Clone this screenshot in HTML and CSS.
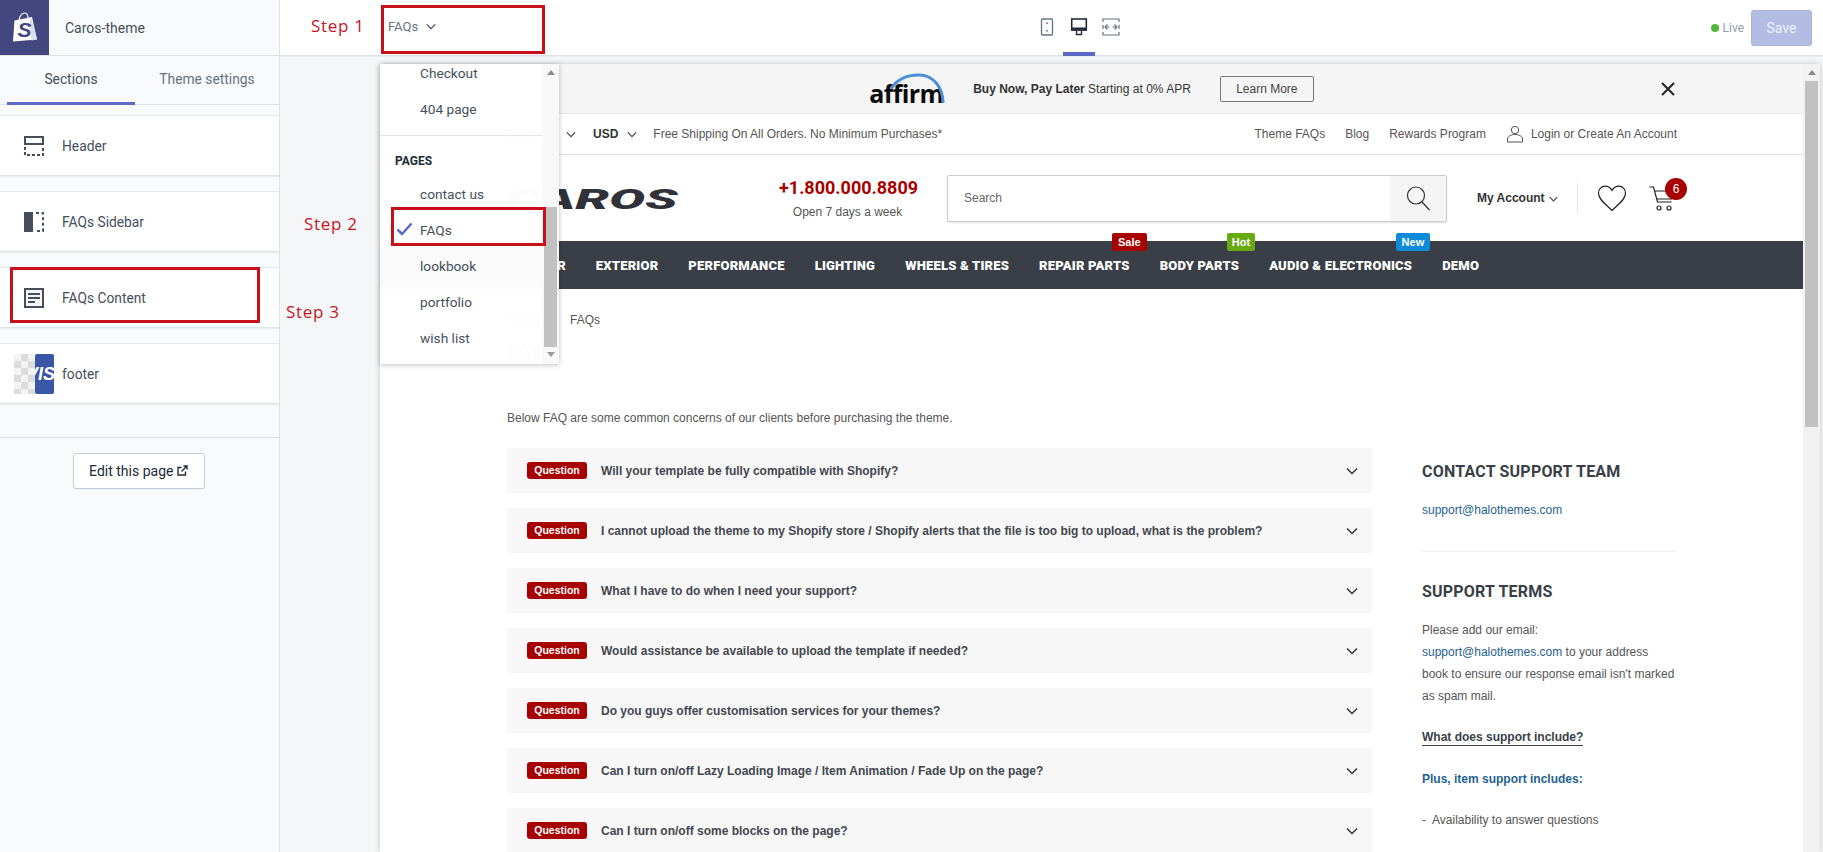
FILE: index.html
```html
<!DOCTYPE html>
<html lang="en">
<head>
    <meta charset="UTF-8">
    <meta name="viewport" content="width=device-width, initial-scale=1.0">
    <title>Caros-theme - Customize</title>
    <link rel="stylesheet" href="styles.css">
</head>

<body>

    <svg class="defs" width="0" height="0">
        <symbol id="chev" viewBox="0 0 12 8"><path d="M1 1.5l5 5 5-5" fill="none" stroke="currentColor" stroke-width="1.5"/></symbol>
    </svg>

    <!-- Top bar -->
    <header class="topbar">
        <div class="brand">
            <div class="brand-logo">
                <svg width="26" height="31" viewBox="0 0 26 31">
                    <path d="M2.500 8.500L20 5 25 27.500 1 29.500z" fill="#fff"/>
                    <path d="M19 5.200L25 27.500 19.500 28.500 17.500 5.500z" fill="#d9dcee"/>
                    <path d="M7 8c0.500-4 3-7 5.500-7S16 3 16 6" fill="none" stroke="#fff" stroke-width="1.200"/>
                    <text x="5.500" y="25" class="brand-s">S</text>
                </svg>
            </div>
            <div class="brand-name">Caros-theme</div>
        </div>
        <div class="page-select">
            <span>FAQs</span>
            <svg class="chev-page" width="10" height="7"><use href="#chev"/></svg>
        </div>
        <div class="devices">
            <div class="device">
                <svg width="16" height="18" viewBox="0 0 16 18"><rect x="2.500" y="1" width="11" height="16" rx="1" fill="none" stroke="#637381" stroke-width="1.300"/><path d="M8 4.500v1.500M8 12v1.500" stroke="#454f5b" stroke-width="1.300"/></svg>
            </div>
            <div class="device device-active">
                <svg width="18" height="18" viewBox="0 0 18 18"><rect x="1.700" y="1" width="14.600" height="11" fill="none" stroke="#212b36" stroke-width="1.600"/><rect x="1.700" y="9.500" width="14.600" height="3" fill="#212b36"/><path d="M6.500 13v3.500h5V13" fill="none" stroke="#212b36" stroke-width="1.400"/></svg>
            </div>
            <div class="device">
                <svg width="18" height="18" viewBox="0 0 18 18"><path d="M1 4V1h16v3M1 14v3h16v-3M1 7v4M17 7v4" fill="none" stroke="#637381" stroke-width="1.200"/><path d="M3 9h4.500M10.500 9H15M5.500 6.500L3 9l2.500 2.500M12.500 6.500L15 9l-2.500 2.500" fill="none" stroke="#637381" stroke-width="1.200"/></svg>
            </div>
        </div>
        <div class="top-actions">
            <span class="live-dot"></span>
            <span class="live-text">Live</span>
            <button class="save-button">Save</button>
        </div>
    </header>

    <div class="workspace">

        <!-- Sidebar -->
        <aside class="sidebar">
            <div class="tabs">
                <div class="tab tab-active">Sections</div>
                <div class="tab">Theme settings</div>
            </div>

            <div class="section-card">
                <svg width="20" height="20" viewBox="0 0 20 20"><rect x="1" y="1" width="18" height="7" fill="#fff" stroke="#454f5b" stroke-width="2"/><path d="M1 11v8h18v-8" fill="none" stroke="#454f5b" stroke-width="2" stroke-dasharray="3 2"/></svg>
                <span>Header</span>
            </div>
            <div class="section-card">
                <svg width="20" height="20" viewBox="0 0 20 20"><rect x="0" y="0" width="9" height="20" fill="#454f5b"/><path d="M12 1h7v18h-7" fill="none" stroke="#454f5b" stroke-width="2" stroke-dasharray="3 2.600"/></svg>
                <span>FAQs Sidebar</span>
            </div>
            <div class="section-card">
                <svg width="20" height="20" viewBox="0 0 20 20"><rect x="1" y="1" width="18" height="18" fill="#f4f6f8" stroke="#454f5b" stroke-width="2"/><path d="M4 6h12M4 10h12M4 14h7" stroke="#454f5b" stroke-width="2"/></svg>
                <span>FAQs Content</span>
            </div>
            <div class="section-card section-card-image">
                <div class="footer-thumb">
                    <div class="thumb-check"></div>
                    <div class="thumb-visa">VIS</div>
                </div>
                <span>footer</span>
            </div>

            <div class="sidebar-foot">
                <button class="edit-button">Edit this page
                    <svg width="11" height="11" viewBox="0 0 11 11"><path d="M8.500 6.500V10H1V2.500h3.500" fill="none" stroke="#212b36" stroke-width="1.400"/><path d="M4.500 6.500L10 1M6.500 1H10v3.500" fill="none" stroke="#212b36" stroke-width="1.400"/></svg>
                </button>
            </div>
        </aside>

        <!-- Store preview -->
        <main class="preview">
            <div class="frame">
                <div class="store">

                    <div class="promo">
                        <div></div>
                        <div class="promo-middle">
                            <div class="affirm">
                                <svg class="affirm-arc" width="56" height="32" viewBox="0 0 56 32"><path d="M2 16C8 6 18 2 30 2c14 0 24 12 24 28" fill="none" stroke="#4a90d9" stroke-width="3"/></svg>
                                <span>affirm</span>
                            </div>
                            <div class="promo-text"><b>Buy Now, Pay Later</b> Starting at 0% APR</div>
                            <button class="learn-more">Learn More</button>
                        </div>
                        <svg class="promo-close" width="16" height="16" viewBox="0 0 16 16"><path d="M2 2l12 12M14 2L2 14" stroke="#222" stroke-width="2"/></svg>
                    </div>

                    <div class="utility">
                        <div class="utility-left">
                            <b class="utility-lang">English</b>
                            <svg class="chev-small" width="10" height="7"><use href="#chev"/></svg>
                            <b class="utility-usd">USD</b>
                            <svg class="chev-small" width="10" height="7"><use href="#chev"/></svg>
                            <span class="utility-ship">Free Shipping On All Orders. No Minimum Purchases*</span>
                        </div>
                        <div class="utility-right">
                            <span>Theme FAQs</span>
                            <span>Blog</span>
                            <span>Rewards Program</span>
                            <span class="utility-login">
                                <svg width="18" height="18" viewBox="0 0 18 18"><circle cx="9" cy="5" r="3.700" fill="none" stroke="#555" stroke-width="1"/><path d="M9 9.500c-3 0-7.500 1.500-7.500 4.500v3h15v-3c0-3-4.500-4.500-7.500-4.500z" fill="none" stroke="#555" stroke-width="1"/></svg>
                                Login or Create An Account
                            </span>
                        </div>
                    </div>

                    <div class="masthead">
                        <div class="logo"><span>CAROS</span></div>
                        <div class="phone">
                            <div class="phone-number">+1.800.000.8809</div>
                            <div class="phone-note">Open 7 days a week</div>
                        </div>
                        <div class="search">
                            <div class="search-input">Search</div>
                            <div class="search-button">
                                <svg width="26" height="26" viewBox="0 0 26 26"><circle cx="11" cy="10.500" r="8.500" fill="none" stroke="#333" stroke-width="1.200"/><path d="M17 17l7.500 8" stroke="#333" stroke-width="1.200"/></svg>
                            </div>
                        </div>
                        <div class="account">My Account <svg class="chev-small" width="9" height="6"><use href="#chev"/></svg></div>
                        <div class="wish">
                            <svg width="30" height="27" viewBox="0 0 30 27"><path d="M15 25.500C9 19.500 1.500 14.500 1.500 8.300 1.500 4 4.500 1.200 8 1.200c3 0 5.500 1.500 7 4.300 1.500-2.800 4-4.300 7-4.300 3.500 0 6.500 2.800 6.500 7.100C28.500 14.500 21 19.500 15 25.500z" fill="none" stroke="#222" stroke-width="1.200"/></svg>
                        </div>
                        <div class="cart">
                            <svg width="26" height="28" viewBox="0 0 26 28"><path d="M0.500 3h4l4 15h14" fill="none" stroke="#222" stroke-width="1.200"/><path d="M5.500 7h19l-2 8H8" fill="none" stroke="#222" stroke-width="1.200"/><circle cx="10" cy="24" r="2" fill="none" stroke="#222" stroke-width="1.200"/><circle cx="20" cy="24" r="2" fill="none" stroke="#222" stroke-width="1.200"/></svg>
                            <span class="cart-count">6</span>
                        </div>
                    </div>

                    <nav class="nav">
                        <a>INTERIOR</a>
                        <a>EXTERIOR</a>
                        <a>PERFORMANCE</a>
                        <a>LIGHTING</a>
                        <a>WHEELS &amp; TIRES</a>
                        <a>REPAIR PARTS<span class="nav-tag tag-sale">Sale</span></a>
                        <a>BODY PARTS<span class="nav-tag tag-hot">Hot</span></a>
                        <a>AUDIO &amp; ELECTRONICS<span class="nav-tag tag-new">New</span></a>
                        <a>DEMO</a>
                    </nav>

                    <div class="content">
                        <div class="breadcrumb"><span class="crumb-home">Home</span><span>FAQs</span></div>
                        <h1>FAQs</h1>
                        <p class="intro">Below FAQ are some common concerns of our clients before purchasing the theme.</p>

                        <div class="columns">
                            <div class="faq-list">
                                <div class="faq-row"><span class="faq-tag">Question</span><span class="faq-q">Will your template be fully compatible with Shopify?</span><svg class="chev-faq" width="12" height="8"><use href="#chev"/></svg></div>
                                <div class="faq-row"><span class="faq-tag">Question</span><span class="faq-q">I cannot upload the theme to my Shopify store / Shopify alerts that the file is too big to upload, what is the problem?</span><svg class="chev-faq" width="12" height="8"><use href="#chev"/></svg></div>
                                <div class="faq-row"><span class="faq-tag">Question</span><span class="faq-q">What I have to do when I need your support?</span><svg class="chev-faq" width="12" height="8"><use href="#chev"/></svg></div>
                                <div class="faq-row"><span class="faq-tag">Question</span><span class="faq-q">Would assistance be available to upload the template if needed?</span><svg class="chev-faq" width="12" height="8"><use href="#chev"/></svg></div>
                                <div class="faq-row"><span class="faq-tag">Question</span><span class="faq-q">Do you guys offer customisation services for your themes?</span><svg class="chev-faq" width="12" height="8"><use href="#chev"/></svg></div>
                                <div class="faq-row"><span class="faq-tag">Question</span><span class="faq-q">Can I turn on/off Lazy Loading Image / Item Animation / Fade Up on the page?</span><svg class="chev-faq" width="12" height="8"><use href="#chev"/></svg></div>
                                <div class="faq-row"><span class="faq-tag">Question</span><span class="faq-q">Can I turn on/off some blocks on the page?</span><svg class="chev-faq" width="12" height="8"><use href="#chev"/></svg></div>
                            </div>

                            <div class="support">
                                <h3>CONTACT SUPPORT TEAM</h3>
                                <p class="support-mail"><a>support@halothemes.com</a></p>
                                <hr>
                                <h3>SUPPORT TERMS</h3>
                                <p class="support-terms">Please add our email:<br><a>support@halothemes.com</a> to your address<br>book to ensure our response email isn't marked<br>as spam mail.</p>
                                <p class="support-what"><b>What does support include?</b></p>
                                <p class="support-plus"><b>Plus, item support includes:</b></p>
                                <p class="support-item">-&nbsp; Availability to answer questions</p>
                            </div>
                        </div>
                    </div>
                </div>

                <div class="scrollbar">
                    <span class="arrow-up"></span>
                    <div class="scroll-thumb"></div>
                </div>
            </div>

            <!-- Page picker dropdown -->
            <div class="dropdown">
                <div class="drop-list">
                    <div class="drop-item drop-first">Checkout</div>
                    <div class="drop-item">404 page</div>
                    <div class="drop-divider"></div>
                    <div class="drop-title">PAGES</div>
                    <div class="drop-item">contact us</div>
                    <div class="drop-item drop-current">
                        <svg width="17" height="14" viewBox="0 0 17 14"><path d="M1.500 7.500l4.500 4.500L15.500 1.500" fill="none" stroke="#5c6ac4" stroke-width="2.500"/></svg>
                        FAQs
                    </div>
                    <div class="drop-item drop-hover">lookbook</div>
                    <div class="drop-item">portfolio</div>
                    <div class="drop-item">wish list</div>
                </div>
                <div class="drop-scroll">
                    <span class="arrow-up"></span>
                    <div class="drop-thumb"></div>
                    <span class="arrow-down"></span>
                </div>
            </div>
        </main>
    </div>

    <!-- Tutorial annotations -->
    <div class="step step-1">Step 1</div>
    <div class="step step-2">Step 2</div>
    <div class="step step-3">Step 3</div>
    <div class="mark mark-1"></div>
    <div class="mark mark-2"></div>
    <div class="mark mark-3"></div>

</body>
</html>
```

FILE: styles.css
```css
* {
    box-sizing: border-box;
}

html, body {
    margin: 0;
    height: 852px;
    overflow: hidden;
}

body {
    position: relative;
    font-family: Roboto, sans-serif;
    font-size: 14px;
    color: #454f5b;
    background: #f4f6f8;
    display: flex;
    flex-direction: column;
}

.defs {
    position: absolute;
}

button {
    font-family: inherit;
}

/* Top bar */
.topbar {
    height: 56px;
    flex: none;
    display: flex;
    align-items: center;
    background: white;
    border-bottom: 1px solid #dfe3e8;
    box-shadow: 0 1px 1px rgba(0, 0, 0, 0.04);
}

.brand {
    width: 280px;
    height: 100%;
    flex: none;
    display: flex;
    align-items: center;
    background: #f9fafb;
    border-right: 1px solid #dfe3e8;
}

.brand-logo {
    width: 49px;
    height: 100%;
    background: #43467f;
    display: flex;
    align-items: center;
    justify-content: center;
}

.brand-s {
    font-family: "Liberation Sans", sans-serif;
    font-weight: bold;
    font-style: italic;
    font-size: 21px;
    fill: #43467f;
}

.brand-name {
    margin-left: 16px;
    font-size: 14px;
}

.page-select {
    width: 700px;
    padding-left: 108px;
    flex: none;
    display: flex;
    align-items: center;
    gap: 8px;
    font-size: 13px;
    color: #637381;
    margin-top: -2px;
}

.chev-page {
    color: #454f5b;
}

.devices {
    height: 56px;
    display: flex;
    margin-left: 51px;
}

.device {
    width: 32px;
    display: flex;
    align-items: center;
    justify-content: center;
    padding-bottom: 2px;
}

.device-active {
    border-bottom: 4px solid #5c6ac4;
    padding-bottom: 0;
    padding-top: 2px;
}

.top-actions {
    margin-left: auto;
    display: flex;
    align-items: center;
    padding-right: 11px;
}

.live-dot {
    width: 8px;
    height: 8px;
    border-radius: 50%;
    background: #50b83c;
    margin-right: 4px;
}

.live-text {
    font-size: 12px;
    color: #919eab;
    margin-right: 7px;
}

.save-button {
    width: 61px;
    height: 36px;
    border: 1px solid #a7b0dc;
    border-radius: 3px;
    background: #b3bce3;
    color: #eef0fa;
    font-size: 14px;
}

/* Main area */
.workspace {
    flex: 1;
    min-height: 0;
    display: flex;
}

.sidebar {
    width: 280px;
    flex: none;
    background: #f9fafb;
    border-right: 1px solid #dfe3e8;
}

.tabs {
    display: flex;
    height: 49px;
    padding-left: 7px;
    border-bottom: 1px solid #dfe3e8;
    margin-bottom: 10px;
    font-size: 13.800px;
}

.tab {
    width: 128px;
    text-align: center;
    line-height: 46px;
    color: #637381;
    margin-bottom: -1px;
}

.tab + .tab {
    width: 144px;
}

.tab-active {
    color: #454f5b;
    border-bottom: 3px solid #5c6ac4;
}

.section-card {
    height: 61px;
    margin-bottom: 15px;
    padding-left: 24px;
    display: flex;
    align-items: center;
    gap: 18px;
    font-size: 13.800px;
    background: white;
    border-top: 1px solid #e4e7eb;
    border-bottom: 1px solid #dfe3e8;
    box-shadow: 0 1px 1px rgba(0, 0, 0, 0.05);
}

.section-card-image {
    padding-left: 14px;
    gap: 8px;
    margin-bottom: 0;
}

.footer-thumb {
    display: flex;
    width: 40px;
    height: 40px;
}

.thumb-check {
    width: 21px;
    background: repeating-conic-gradient(#dcdcdc 0 25%, #f3f3f3 0 50%) 0 0 / 14px 14px;
}

.thumb-visa {
    width: 19px;
    overflow: hidden;
    background: #3a57a7;
    border-radius: 2px;
    color: white;
    font-family: "Liberation Sans", sans-serif;
    font-weight: bold;
    font-style: italic;
    font-size: 18px;
    line-height: 40px;
    text-indent: -9px;
    white-space: nowrap;
}

.sidebar-foot {
    margin-top: 33px;
    padding-top: 15px;
    border-top: 1px solid #dfe3e8;
    display: flex;
    justify-content: center;
    padding-right: 2px;
}

.edit-button {
    width: 132px;
    height: 36px;
    background: white;
    border: 1px solid #c4cdd5;
    border-radius: 3px;
    color: #212b36;
    font-size: 14px;
    box-shadow: 0 1px 0 rgba(22, 29, 37, 0.05);
}

/* Preview */
.preview {
    flex: 1;
    min-width: 0;
    position: relative;
    padding: 8px 3px 0 100px;
}

.frame {
    height: 100%;
    display: flex;
    overflow: hidden;
    background: white;
    box-shadow: 0 0 6px rgba(0, 0, 0, 0.2);
}

.store {
    width: 1423px;
    flex: none;
    font-family: "Liberation Sans", Arial, sans-serif;
    font-size: 12px;
    color: #555;
}

.scrollbar {
    width: 17px;
    background: #f1f1f1;
    padding-top: 6px;
    display: flex;
    flex-direction: column;
    align-items: center;
}

.scroll-thumb {
    width: 13px;
    height: 346px;
    margin-top: 6px;
    background: #c1c1c1;
}

.arrow-up,
.arrow-down {
    width: 0;
    height: 0;
    border-left: 4px solid transparent;
    border-right: 4px solid transparent;
}

.arrow-up {
    border-bottom: 5px solid #8a8a8a;
}

.arrow-down {
    border-top: 5px solid #9a9a9a;
}

.promo {
    height: 50px;
    display: grid;
    grid-template-columns: 1fr auto 1fr;
    align-items: center;
    padding: 0 127px;
    background: #f5f5f5;
    border-bottom: 1px solid #e5e5e5;
}

.promo-middle {
    display: flex;
    align-items: center;
}

.affirm {
    position: relative;
    width: 76px;
    font-size: 25px;
    font-weight: bold;
    font-family: "Open Sans", sans-serif;
    letter-spacing: -0.6px;
    line-height: 30px;
    color: #0a0a0a;
    padding-top: 9px;
}

.affirm-arc {
    position: absolute;
    right: 0;
    top: 4px;
}

.promo-text {
    margin-left: 28px;
    color: #333;
    font-size: 12px;
}

.learn-more {
    margin-left: 29px;
    width: 94px;
    height: 26px;
    background: transparent;
    border: 1px solid #777;
    border-radius: 2px;
    color: #444;
    font-size: 12px;
}

.promo-close {
    justify-self: end;
}

.utility {
    height: 41px;
    padding: 0 126px;
    display: flex;
    align-items: center;
    justify-content: space-between;
    border-bottom: 1px solid #e5e5e5;
}

.utility-left,
.utility-right {
    display: flex;
    align-items: center;
}

.utility-left b {
    color: #333;
}

.utility-lang {
    width: 51px;
}

.chev-small {
    color: #444;
    margin-left: 9px;
}

.utility-usd {
    margin-left: 17px;
}

.utility-ship {
    margin-left: 16px;
}

.utility-right {
    gap: 20px;
}

.utility-login {
    display: flex;
    align-items: center;
    gap: 7px;
}

.masthead {
    height: 86px;
    padding: 0 126px;
    display: flex;
    align-items: center;
}

.logo {
    width: 170px;
    padding-top: 3px;
    font-family: Roboto, sans-serif;
    font-weight: 900;
    font-style: italic;
    font-size: 27px;
    line-height: 30px;
    color: #2f3238;
    white-space: nowrap;
}

.logo span {
    display: inline-block;
    transform-origin: left center;
    transform: scaleX(1.980);
}

.phone {
    width: 137px;
    margin-left: 103px;
    text-align: center;
    padding-top: 1px;
}

.phone-number {
    font-family: Roboto, sans-serif;
    font-weight: bold;
    font-size: 18px;
    line-height: 24px;
    color: #a80000;
    white-space: nowrap;
}

.phone-note {
    margin-top: 2px;
    line-height: 20px;
}

.search {
    width: 500px;
    height: 47px;
    margin-left: 31px;
    display: flex;
    background: white;
    border: 1px solid #ccc;
    border-radius: 2px;
    box-shadow: 0 1px 2px rgba(0, 0, 0, 0.12);
}

.search-input {
    flex: 1;
    line-height: 45px;
    padding-left: 16px;
    color: #666;
}

.search-button {
    width: 56px;
    background: #f5f5f5;
    display: flex;
    align-items: center;
    justify-content: center;
}

.account {
    margin-left: 30px;
    width: 101px;
    height: 30px;
    line-height: 30px;
    color: #333;
    font-weight: bold;
    white-space: nowrap;
    border-right: 1px solid #e5e5e5;
}

.account .chev-small {
    margin-left: 1px;
}

.wish {
    margin-left: 19px;
    height: 27px;
}

.cart {
    position: relative;
    margin-left: 22px;
    height: 28px;
}

.cart-count {
    position: absolute;
    top: -6px;
    left: 16px;
    width: 22px;
    height: 22px;
    border-radius: 50%;
    background: #a80000;
    color: white;
    text-align: center;
    line-height: 22px;
    font-size: 12px;
}

.nav {
    height: 48px;
    padding: 0 126px;
    display: flex;
    align-items: center;
    gap: 30px;
    background: #3a3f47;
}

.nav a {
    position: relative;
    font-family: Roboto, sans-serif;
    font-weight: 900;
    font-size: 13px;
    letter-spacing: 0.2px;
    color: white;
    white-space: nowrap;
}

.nav-tag {
    position: absolute;
    top: -25px;
    height: 18px;
    padding: 0 6px;
    border-radius: 2px;
    font-family: "Liberation Sans", sans-serif;
    font-weight: bold;
    font-size: 11px;
    letter-spacing: 0;
    line-height: 18px;
}

.tag-sale {
    right: -17px;
    background: #a80000;
}

.tag-hot {
    right: -16px;
    padding: 0 5px;
    background: #69a913;
}

.tag-new {
    right: -18px;
    background: #0a8ad8;
}

.content {
    padding: 0 127px;
}

.breadcrumb {
    padding-top: 21px;
    line-height: 20px;
    display: flex;
}

.crumb-home {
    width: 63px;
}

h1 {
    margin: 8px 0 0;
    font-family: Roboto, sans-serif;
    font-size: 22px;
    line-height: 30px;
    font-weight: bold;
    color: #3a3f47;
}

.intro {
    margin: 40px 0 20px;
    line-height: 20px;
}

.columns {
    display: flex;
    gap: 50px;
}

.faq-list {
    width: 865px;
    flex: none;
}

.faq-row {
    height: 45px;
    margin-bottom: 15px;
    display: flex;
    align-items: center;
    padding: 0 14px 0 20px;
    background: #f7f7f7;
}

.faq-tag {
    width: 60px;
    height: 17px;
    background: #a80000;
    border-radius: 3px;
    color: white;
    font-size: 10.500px;
    font-weight: bold;
    text-align: center;
    line-height: 17px;
}

.faq-q {
    margin-left: 14px;
    color: #44474f;
    font-weight: bold;
    flex: 1;
}

.chev-faq {
    color: #333;
}

.support {
    width: 255px;
    padding-top: 12px;
}

.support h3 {
    margin: 0;
    font-family: Roboto, sans-serif;
    font-size: 16px;
    line-height: 24px;
    font-weight: bold;
    letter-spacing: 0.2px;
    color: #3a3f47;
}

.support p {
    margin: 0;
    line-height: 22px;
}

.support a {
    color: #1f6391;
}

.support .support-mail {
    margin-top: 15px;
}

.support hr {
    border: 0;
    border-top: 1px solid #eee;
    margin: 30px 0 28px;
}

.support .support-terms {
    margin-top: 15px;
}

.support .support-what {
    margin-top: 19px;
}

.support-what b {
    color: #3a3f47;
    border-bottom: 1px solid #3a3f47;
    padding-bottom: 1px;
}

.support .support-plus {
    margin-top: 20px;
    color: #1f6391;
}

.support .support-item {
    margin-top: 19px;
}

/* Dropdown */
.dropdown {
    position: absolute;
    left: 100px;
    top: 8px;
    width: 179px;
    height: 300px;
    display: flex;
    overflow: hidden;
    background: rgba(255, 255, 255, 0.985);
    box-shadow: 0 1px 5px rgba(0, 0, 0, 0.25);
}

.drop-list {
    width: 162px;
    flex: none;
    margin-top: -9px;
    font-size: 13.700px;
}

.drop-item {
    position: relative;
    height: 36px;
    line-height: 36px;
    padding-left: 40px;
    color: #454f5b;
}

.drop-divider {
    margin-top: 8px;
    border-top: 1px solid #e3e6e9;
}

.drop-title {
    height: 40px;
    padding: 10px 0 0 15px;
    line-height: 30px;
    font-size: 12px;
    font-weight: bold;
    color: #212b36;
}

.drop-current svg {
    position: absolute;
    left: 16px;
    top: 10px;
}

.drop-hover {
    background: #fafafa;
}

.drop-scroll {
    flex: 1;
    position: relative;
    padding-top: 6px;
    background: #f8f8f8;
    display: flex;
    flex-direction: column;
    align-items: center;
}

.drop-thumb {
    width: 13px;
    height: 140px;
    margin-top: 132px;
    background: #c1c1c1;
}

.drop-scroll .arrow-down {
    margin-top: 5px;
}

/* Tutorial annotations */
.step {
    position: absolute;
    font-family: "Open Sans", sans-serif;
    font-size: 17px;
    letter-spacing: 0.7px;
    line-height: 22px;
    color: #c8141c;
}

.step-1 {
    left: 311px;
    top: 15px;
}

.step-2 {
    left: 304px;
    top: 213px;
}

.step-3 {
    left: 286px;
    top: 301px;
}

.mark {
    position: absolute;
    border: 3px solid #c8101a;
}

.mark-1 {
    left: 381px;
    top: 5px;
    width: 164px;
    height: 49px;
}

.mark-2 {
    left: 391px;
    top: 207px;
    width: 155px;
    height: 39px;
}

.mark-3 {
    left: 10px;
    top: 267px;
    width: 250px;
    height: 56px;
}
```
